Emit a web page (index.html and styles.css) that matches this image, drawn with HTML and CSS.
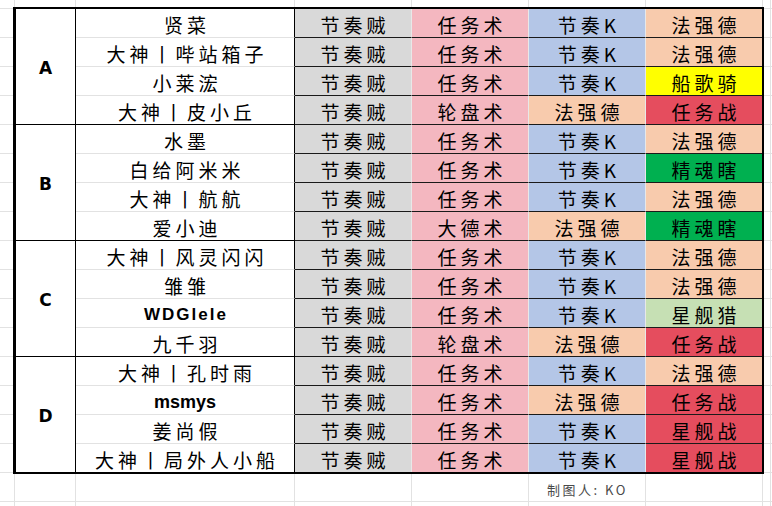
FILE: index.html
```html
<!DOCTYPE html>
<html lang="zh-CN">
<head>
<meta charset="utf-8">
<title>分组表</title>
<link rel="stylesheet" href="styles.css">
</head>
<body>
<div class="sheet">
  <div class="table">
    <div class="grp ga">A</div>
    <div class="name">贤菜</div><div class="c gray">节奏贼</div><div class="c pink">任务术</div><div class="c blue">节奏K</div><div class="c orange end">法强德</div>
    <div class="name">大神丨哔站箱子</div><div class="c gray">节奏贼</div><div class="c pink">任务术</div><div class="c blue">节奏K</div><div class="c orange end">法强德</div>
    <div class="name">小莱浤</div><div class="c gray">节奏贼</div><div class="c pink">任务术</div><div class="c blue">节奏K</div><div class="c yellow end">船歌骑</div>
    <div class="name last">大神丨皮小丘</div><div class="c gray">节奏贼</div><div class="c pink">轮盘术</div><div class="c orange">法强德</div><div class="c red end">任务战</div>

    <div class="grp gb">B</div>
    <div class="name">水墨</div><div class="c gray">节奏贼</div><div class="c pink">任务术</div><div class="c blue">节奏K</div><div class="c orange end">法强德</div>
    <div class="name">白给阿米米</div><div class="c gray">节奏贼</div><div class="c pink">任务术</div><div class="c blue">节奏K</div><div class="c green end">精魂瞎</div>
    <div class="name">大神丨航航</div><div class="c gray">节奏贼</div><div class="c pink">任务术</div><div class="c blue">节奏K</div><div class="c orange end">法强德</div>
    <div class="name last">爱小迪</div><div class="c gray">节奏贼</div><div class="c pink">大德术</div><div class="c orange">法强德</div><div class="c green end">精魂瞎</div>

    <div class="grp gc">C</div>
    <div class="name">大神丨风灵闪闪</div><div class="c gray">节奏贼</div><div class="c pink">任务术</div><div class="c blue">节奏K</div><div class="c orange end">法强德</div>
    <div class="name">雏雏</div><div class="c gray">节奏贼</div><div class="c pink">任务术</div><div class="c blue">节奏K</div><div class="c orange end">法强德</div>
    <div class="name latin spaced">WDGlele</div><div class="c gray">节奏贼</div><div class="c pink">任务术</div><div class="c blue">节奏K</div><div class="c lgreen end">星舰猎</div>
    <div class="name last">九千羽</div><div class="c gray">节奏贼</div><div class="c pink">轮盘术</div><div class="c orange">法强德</div><div class="c red end">任务战</div>

    <div class="grp gd final">D</div>
    <div class="name">大神丨孔时雨</div><div class="c gray">节奏贼</div><div class="c pink">任务术</div><div class="c blue">节奏K</div><div class="c orange end">法强德</div>
    <div class="name latin">msmys</div><div class="c gray">节奏贼</div><div class="c pink">任务术</div><div class="c orange">法强德</div><div class="c red end">任务战</div>
    <div class="name">姜尚假</div><div class="c gray">节奏贼</div><div class="c pink">任务术</div><div class="c blue">节奏K</div><div class="c red end">星舰战</div>
    <div class="name bottom">大神丨局外人小船</div><div class="c gray bottom">节奏贼</div><div class="c pink bottom">任务术</div><div class="c blue bottom">节奏K</div><div class="c red end bottom">星舰战</div>
  </div>
  <div class="foot">
    <span class="credit">制图人: KO</span>
  </div>
</div>
</body>
</html>
```

FILE: styles.css
```css
html, body {
  margin: 0;
  padding: 0;
}
body {
  width: 772px;
  height: 506px;
  overflow: hidden;
  background-color: #fff;
  background-image:
    linear-gradient(#e2e2e2, #e2e2e2),
    linear-gradient(#e2e2e2, #e2e2e2),
    linear-gradient(#e2e2e2, #e2e2e2),
    linear-gradient(#e2e2e2, #e2e2e2),
    linear-gradient(#e2e2e2, #e2e2e2),
    linear-gradient(#e2e2e2, #e2e2e2),
    linear-gradient(#e2e2e2, #e2e2e2),
    linear-gradient(#e2e2e2, #e2e2e2),
    repeating-linear-gradient(to bottom, transparent 0 28px, #e2e2e2 28px 29px);
  background-size: 1px 100%, 1px 100%, 1px 100%, 1px 100%, 1px 100%, 1px 100%, 1px 100%, 1px 100%, 100% 29px;
  background-position: 14px 0, 75px 0, 294px 0, 411px 0, 528px 0, 645px 0, 762px 0, 770px 0, 0 9px;
  background-repeat: no-repeat, no-repeat, no-repeat, no-repeat, no-repeat, no-repeat, no-repeat, no-repeat, repeat-y;
  font-family: "Noto Sans CJK SC", sans-serif;
  color: #000;
}

.sheet {
  padding: 7px 0 0 13px;
}

.table {
  display: grid;
  width: 746px;
  grid-template-columns: 60px 219px 117px 117px 117px 116px;
  grid-template-rows: repeat(15, 29px) 28px;
  border-top: 2px solid #000;
  border-left: 3px solid #000;
  border-right: 2px solid #000;
  border-bottom: 2px solid #000;
  background: #fff;
}

.table > div {
  box-sizing: border-box;
  display: flex;
  align-items: center;
  justify-content: center;
  white-space: nowrap;
}

.grp {
  grid-column: 1;
  border-right: 1px solid #000;
  border-bottom: 1px solid #000;
  font-family: "DejaVu Sans", sans-serif;
  font-weight: bold;
  font-size: 17px;
  padding-top: 3px;
}
.ga { grid-row: 1 / span 4; }
.gb { grid-row: 5 / span 4; }
.gc { grid-row: 9 / span 4; }
.gd { grid-row: 13 / span 4; }
.grp.final { border-bottom: none; }

.name {
  border-right: 1px solid #000;
  border-bottom: 1px solid #e2e2e2;
  font-size: 19px;
  letter-spacing: 4px;
  text-indent: 4px;
  padding-top: 3px;
}
.name.last { border-bottom-color: #000; }
.name.latin {
  font-family: "Liberation Sans", "Noto Sans CJK SC", sans-serif;
  font-size: 18px;
  font-weight: bold;
  letter-spacing: 0;
  text-indent: 0;
  padding-top: 4px;
}
.name.latin.spaced {
  font-size: 17px;
  letter-spacing: 2px;
  text-indent: 2px;
}

.c {
  border-right: 1px solid #e8e8e8;
  border-bottom: 1px solid #1a1a1a;
  font-size: 19px;
  letter-spacing: 4px;
  text-indent: 4px;
  padding-top: 3px;
}
.c.end { border-right: none; }
.table > .bottom { border-bottom: none; }

.gray { background: #d9d9d9; }
.pink { background: #f4b7c0; }
.blue { background: #b4c6e7; }
.orange { background: #f8cbad; }
.yellow { background: #ffff00; }
.red { background: #e54d5e; }
.green { background: #00b050; }
.lgreen { background: #c6e0b4; }

.foot {
  display: grid;
  grid-template-columns: 60px 219px 117px 117px 117px 116px;
  padding-left: 3px;
  height: 28px;
  align-items: center;
}
.credit {
  grid-column: 5;
  justify-self: center;
  font-size: 13px;
  letter-spacing: 2.5px;
  color: #4a4a4a;
  padding-top: 2px;
}
```
